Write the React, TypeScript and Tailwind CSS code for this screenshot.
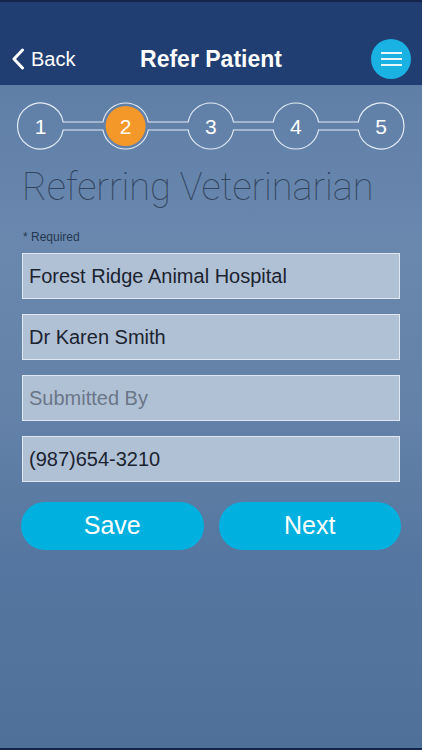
import React from "react";

const steps = [1, 2, 3, 4, 5];
const cx = [40.5, 125.6, 210.8, 295.9, 381];
const CY = 25;
const R = 23;
const H = 4;
const DX = Math.sqrt(R * R - H * H);

// outline of the stepper: circles joined by thin tubes
const stepperPath = () => {
  let d = `M ${cx[0] + DX} ${CY - H}`;
  for (let i = 1; i < cx.length; i++) {
    d += ` L ${cx[i] - DX} ${CY - H}`;
    if (i < cx.length - 1) d += ` A ${R} ${R} 0 0 1 ${cx[i] + DX} ${CY - H}`;
    else d += ` A ${R} ${R} 0 1 1 ${cx[i] - DX} ${CY + H}`;
  }
  for (let i = cx.length - 2; i >= 0; i--) {
    d += ` L ${cx[i] + DX} ${CY + H}`;
    if (i > 0) d += ` A ${R} ${R} 0 0 1 ${cx[i] - DX} ${CY + H}`;
    else d += ` A ${R} ${R} 0 1 1 ${cx[i] + DX} ${CY - H}`;
  }
  return d + " Z";
};

const Field = ({ value, placeholder }: { value?: string; placeholder?: string }) => (
  <div className="h-[46px] bg-[#b1c1d5] border border-[#dfe7f1] flex items-center px-[6px]">
    {value ? (
      <span className="text-[20px] text-[#1b2330]">{value}</span>
    ) : (
      <span className="text-[20px] text-[#6b7688]">{placeholder}</span>
    )}
  </div>
);

export default function App() {
  return (
    <div
      className="w-[422px] h-[750px] flex flex-col border-t-2 border-b-2 border-[#14244a] bg-[linear-gradient(to_bottom,#5a7aa3_0px,#6a88ae_32%,#6482a8_55%,#5476a0_75%,#4f7199_100%)]"
      style={{ fontFamily: '"Liberation Sans", Arial, sans-serif' }}
    >
      {/* Header */}
      <div className="h-[83px] bg-[#203e72] pt-[35px] px-[11px]">
        <div className="h-[44px] flex items-center justify-between">
          <div className="flex items-center gap-[6px] w-[110px]">
            <svg width="14" height="22" viewBox="0 0 14 22">
              <path d="M11.5 2 L3 11 L11.5 20" fill="none" stroke="white" strokeWidth="3" strokeLinecap="round" strokeLinejoin="round" />
            </svg>
            <span className="text-white text-[20px]">Back</span>
          </div>
          <span className="text-white text-[23px] font-bold">Refer Patient</span>
          <div className="w-[110px] flex justify-end">
            <div className="w-[40px] h-[40px] rounded-full bg-[#1ab1e3] flex flex-col items-center justify-center gap-[4.5px]">
              <div className="w-[21px] h-[1.5px] bg-white/90" />
              <div className="w-[21px] h-[1.5px] bg-white/90" />
              <div className="w-[21px] h-[1.5px] bg-white/90" />
            </div>
          </div>
        </div>
      </div>

      {/* Stepper */}
      <div className="pt-[16px]">
        <svg width="422" height="50" viewBox="0 0 422 50">
          <path d={stepperPath()} fill="none" stroke="#e4ebf4" strokeWidth="1.2" />
          <circle cx={cx[1]} cy={CY} r={20} fill="#f5982a" />
          {steps.map((s, i) => (
            <text
              key={s}
              x={cx[i]}
              y={CY + 7.5}
              textAnchor="middle"
              fill="white"
              fontSize="21"
              fontFamily='"Liberation Sans", Arial, sans-serif'
            >
              {s}
            </text>
          ))}
        </svg>
      </div>

      {/* Form */}
      <div className="px-[22px]">
        <h1
          className="text-[38px] text-[#33445d] leading-none mt-[17px] tracking-[-0.1px]"
          style={{ fontFamily: 'Roboto, "Liberation Sans", sans-serif', fontWeight: 100 }}
        >
          Referring Veterinarian
        </h1>
        <div className="text-[12px] text-[#27374f] mt-[22px] ml-[1px]">* Required</div>
        <div className="flex flex-col gap-[15px] mt-[7px]">
          <Field value="Forest Ridge Animal Hospital" />
          <Field value="Dr Karen Smith" />
          <Field placeholder="Submitted By" />
          <Field value="(987)654-3210" />
        </div>
        <div className="flex gap-[15px] mt-[20px] -mx-[1px]">
          <button className="flex-1 h-[48px] rounded-full bg-[#00b1e0] text-white text-[25px]">Save</button>
          <button className="flex-1 h-[48px] rounded-full bg-[#00b1e0] text-white text-[25px]">Next</button>
        </div>
      </div>
    </div>
  );
}
